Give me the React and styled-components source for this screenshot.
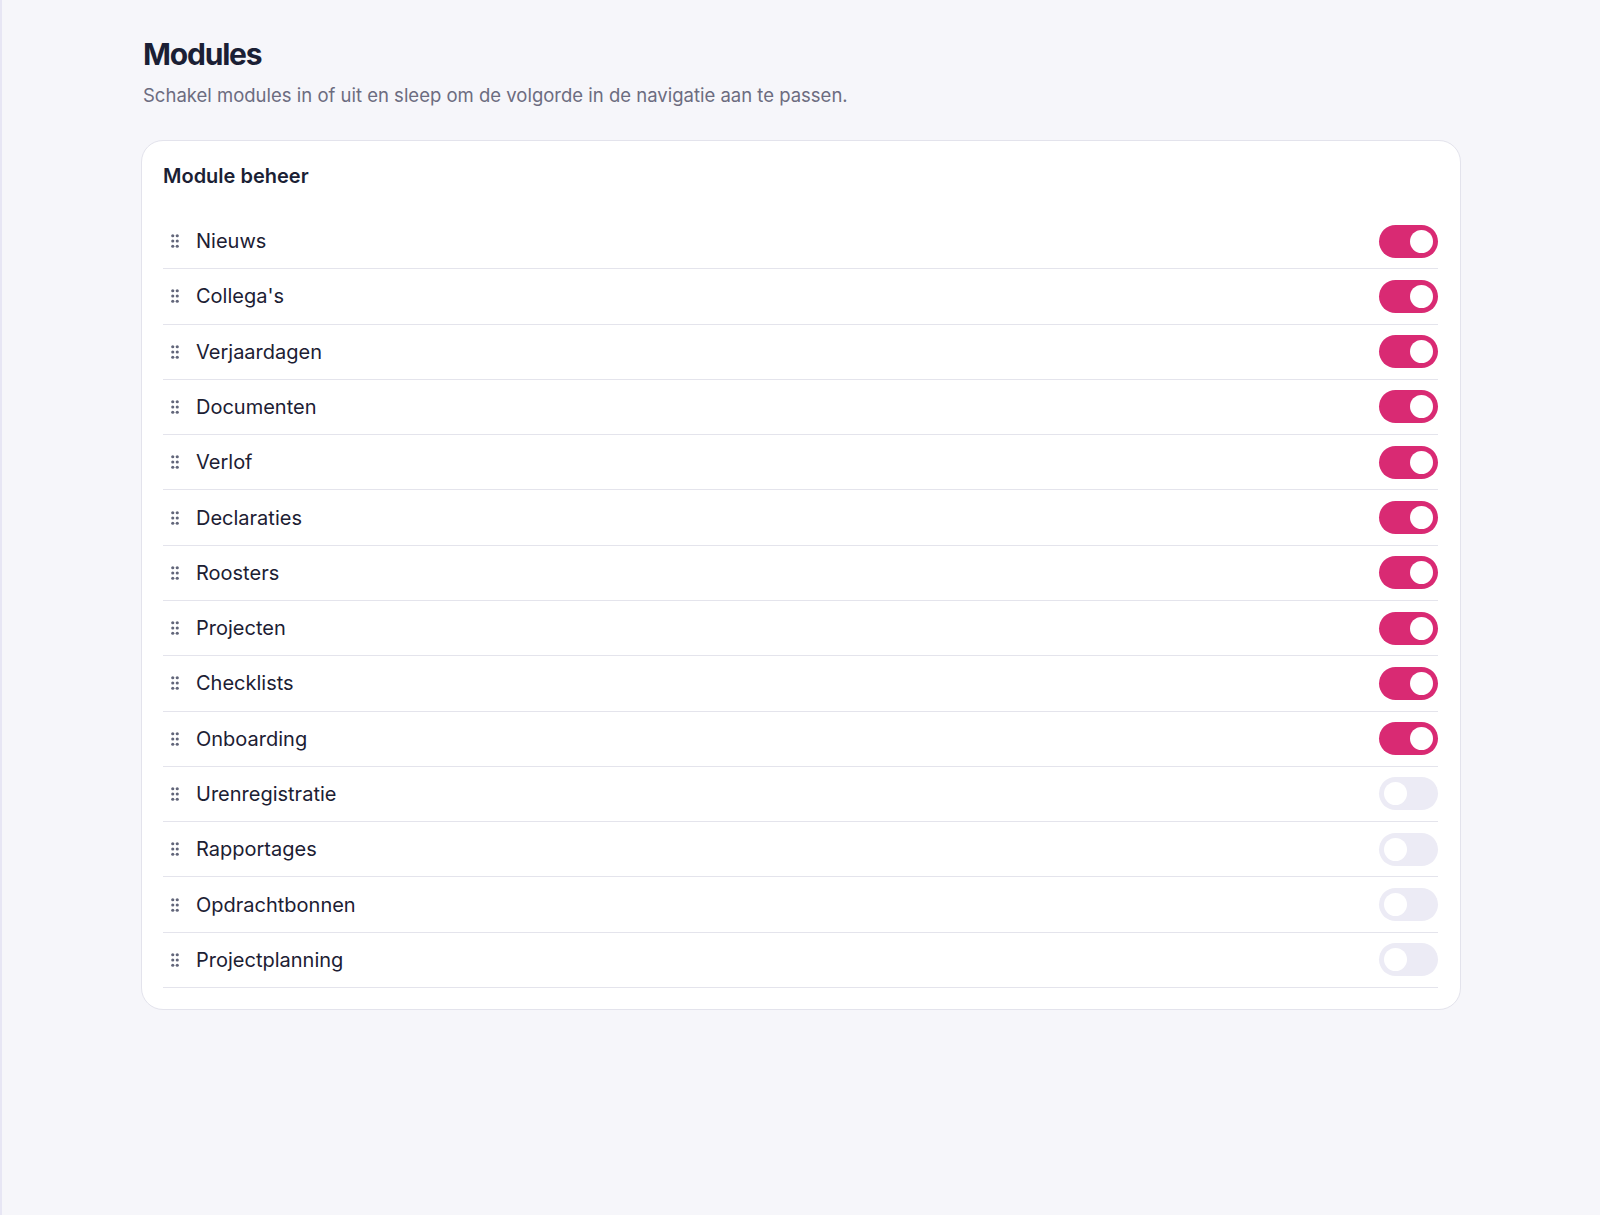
import { useState } from 'react';
import styled, { createGlobalStyle } from 'styled-components';

const GlobalStyle = createGlobalStyle`
  html, body {
    margin: 0;
    padding: 0;
    background: #f6f6fa;
  }
  body {
    font-family: Inter, 'Noto Sans', Arial, sans-serif;
    color: #1c2033;
  }
  * {
    box-sizing: border-box;
  }
`;

const Page = styled.div`
  min-height: 1215px;
  border-left: 2px solid #e7e6f4;
  padding: 36px 139px 40px 139px;
`;

const Title = styled.h1`
  margin: 0 0 0 2px;
  font-size: 30px;
  line-height: 36px;
  font-weight: 700;
  letter-spacing: -1.2px;
  color: #1b1f35;
`;

const Subtitle = styled.p`
  margin: 10px 0 0 2px;
  font-size: 18.5px;
  line-height: 26px;
  color: #6c6c80;
`;

const Card = styled.section`
  margin-top: 32px;
  background: #ffffff;
  border: 1px solid #e3e3ec;
  border-radius: 22px;
  padding: 21px 22px 21px 21px;
`;

const CardTitle = styled.h2`
  margin: 0 0 24px;
  font-size: 20px;
  line-height: 28px;
  font-weight: 600;
  color: #1b1f35;
`;

const List = styled.ul`
  list-style: none;
  margin: 0;
  padding: 0;
`;

const Row = styled.li`
  display: flex;
  align-items: center;
  padding: 10.65px 0;
  border-bottom: 1px solid #e4e4ec;
`;

const Handle = styled.span`
  display: flex;
  align-items: center;
  justify-content: center;
  width: 20px;
  height: 20px;
  margin-left: 2px;
  color: #62667a;
  cursor: grab;
`;

const Label = styled.span`
  flex: 1;
  margin-left: 11px;
  font-size: 20px;
  color: #1c2033;
`;

const Switch = styled.button`
  position: relative;
  width: 59px;
  height: 33px;
  padding: 0;
  border: none;
  border-radius: 17px;
  background: ${(p) => (p.$on ? '#d92a73' : '#ecebf5')};
  cursor: pointer;
  transition: background 0.15s;

  &::after {
    content: '';
    position: absolute;
    top: 5px;
    left: ${(p) => (p.$on ? '31px' : '5px')};
    width: 23px;
    height: 23px;
    border-radius: 50%;
    background: #ffffff;
    transition: left 0.15s;
  }
`;

const GripIcon = () => (
  <svg width="18" height="18" viewBox="0 0 24 24" fill="currentColor">
    <circle cx="9" cy="5" r="2.1" />
    <circle cx="15" cy="5" r="2.1" />
    <circle cx="9" cy="12" r="2.1" />
    <circle cx="15" cy="12" r="2.1" />
    <circle cx="9" cy="19" r="2.1" />
    <circle cx="15" cy="19" r="2.1" />
  </svg>
);

const initialModules = [
  { name: 'Nieuws', on: true },
  { name: "Collega's", on: true },
  { name: 'Verjaardagen', on: true },
  { name: 'Documenten', on: true },
  { name: 'Verlof', on: true },
  { name: 'Declaraties', on: true },
  { name: 'Roosters', on: true },
  { name: 'Projecten', on: true },
  { name: 'Checklists', on: true },
  { name: 'Onboarding', on: true },
  { name: 'Urenregistratie', on: false },
  { name: 'Rapportages', on: false },
  { name: 'Opdrachtbonnen', on: false },
  { name: 'Projectplanning', on: false },
];

const App = () => {
  const [modules, setModules] = useState(initialModules);

  const toggle = (i) => {
    setModules((list) =>
      list.map((m, idx) => (idx === i ? { ...m, on: !m.on } : m))
    );
  };

  return (
    <>
      <GlobalStyle />
      <Page>
        <Title>Modules</Title>
        <Subtitle>
          Schakel modules in of uit en sleep om de volgorde in de navigatie aan te passen.
        </Subtitle>
        <Card>
          <CardTitle>Module beheer</CardTitle>
          <List>
            {modules.map((m, i) => (
              <Row key={m.name}>
                <Handle>
                  <GripIcon />
                </Handle>
                <Label>{m.name}</Label>
                <Switch
                  type="button"
                  role="switch"
                  aria-checked={m.on}
                  $on={m.on}
                  onClick={() => toggle(i)}
                />
              </Row>
            ))}
          </List>
        </Card>
      </Page>
    </>
  );
};

export default App;
